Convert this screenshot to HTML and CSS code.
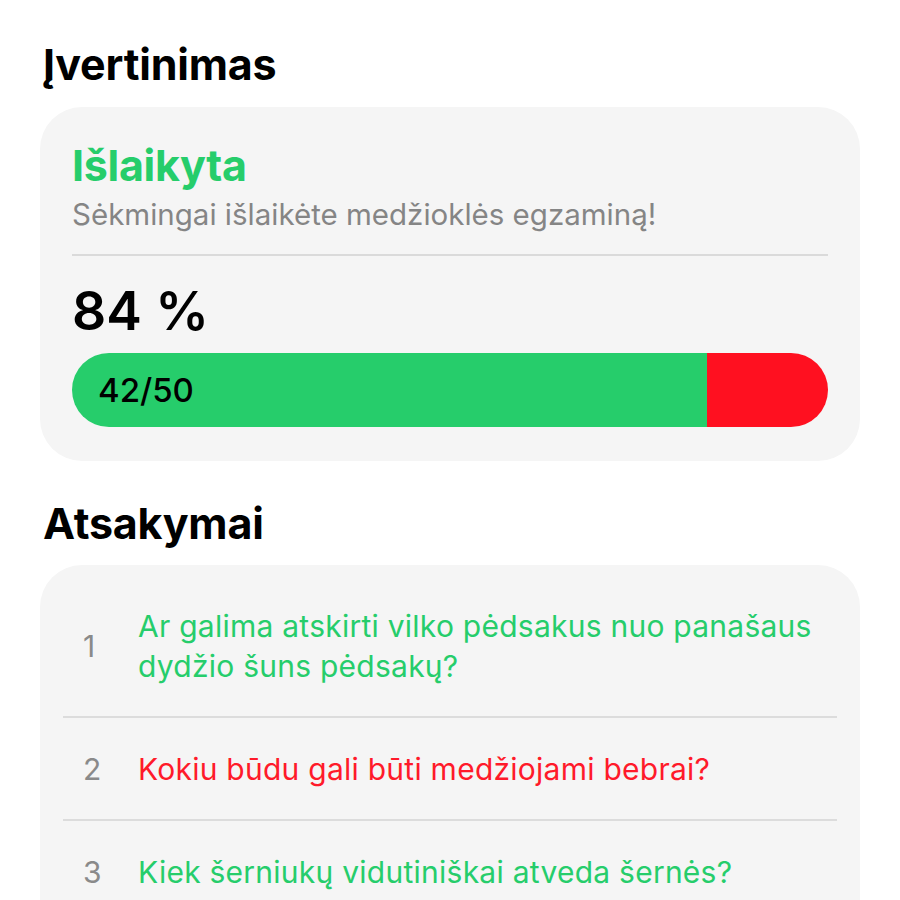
FILE: index.html
```html
<!DOCTYPE html>
<html lang="lt">
<head>
<meta charset="utf-8">
<title>Įvertinimas</title>
<link rel="stylesheet" href="styles.css">
</head>
<body>
<main class="page">
  <h2 class="section-title">Įvertinimas</h2>
  <section class="card result">
    <div class="result-title">Išlaikyta</div>
    <div class="result-sub">Sėkmingai išlaikėte medžioklės egzaminą!</div>
    <div class="divider"></div>
    <div class="percent">84 %</div>
    <div class="bar">
      <div class="bar-ok" style="width: 84%"><span class="bar-label">42/50</span></div>
      <div class="bar-bad"></div>
    </div>
  </section>

  <h2 class="section-title answers-title">Atsakymai</h2>
  <section class="card answers">
    <div class="row">
      <span class="num">1</span>
      <span class="q ok">Ar galima atskirti vilko pėdsakus nuo panašaus dydžio šuns pėdsakų?</span>
    </div>
    <div class="row">
      <span class="num">2</span>
      <span class="q bad">Kokiu būdu gali būti medžiojami bebrai?</span>
    </div>
    <div class="row">
      <span class="num">3</span>
      <span class="q ok">Kiek šerniukų vidutiniškai atveda šernės?</span>
    </div>
  </section>
</main>
</body>
</html>
```
FILE: styles.css
```css
* { box-sizing: border-box; }
html, body { margin: 0; padding: 0; background: #ffffff; }
body {
  font-family: "Inter", "Liberation Sans", sans-serif;
  color: #000;
  height: 900px;
  overflow: hidden;
}
.page {
  padding: 38px 40px 0 40px;
}
.section-title {
  margin: 0 0 0 3px;
  font-size: 43px;
  line-height: 52px;
  font-weight: 700;
  letter-spacing: -0.2px;
}
.card {
  background: #f5f5f5;
  border-radius: 42px;
}
.result {
  margin-top: 17px;
  padding: 34px 32px 34px 32px;
}
.result-title {
  color: #26cd6b;
  font-size: 43px;
  line-height: 48px;
  font-weight: 700;
  letter-spacing: -0.3px;
}
.result-sub {
  color: #858585;
  font-size: 29.5px;
  line-height: 36px;
  margin-top: 7px;
}
.divider {
  height: 2px;
  background: #dadada;
  margin-top: 22px;
}
.percent {
  font-size: 53.5px;
  line-height: 62px;
  font-weight: 600;
  margin-top: 24px;
}
.bar {
  display: flex;
  height: 74px;
  border-radius: 37px;
  overflow: hidden;
  margin-top: 11px;
}
.bar-ok {
  background: #26cd6b;
  display: flex;
  align-items: center;
  padding-left: 26px;
}
.bar-bad {
  flex: 1;
  background: #ff1020;
}
.bar-label {
  font-size: 33px;
  font-weight: 500;
}
.answers-title {
  margin-top: 36px;
}
.answers {
  margin-top: 16px;
  padding: 10px 23px 0 23px;
  height: 400px;
}
.row {
  display: flex;
  align-items: center;
  padding: 31px 6px 30px 20px;
  border-bottom: 2px solid #dcdcdc;
}
.row:last-child { border-bottom: none; }
.num {
  width: 55px;
  flex: none;
  color: #8a8a8a;
  font-size: 30px;
  line-height: 40px;
}
.q {
  font-size: 30px;
  line-height: 40px;
  letter-spacing: 0.25px;
}
.q.ok { color: #26cd6b; }
.q.bad { color: #ff1a2a; }
```
